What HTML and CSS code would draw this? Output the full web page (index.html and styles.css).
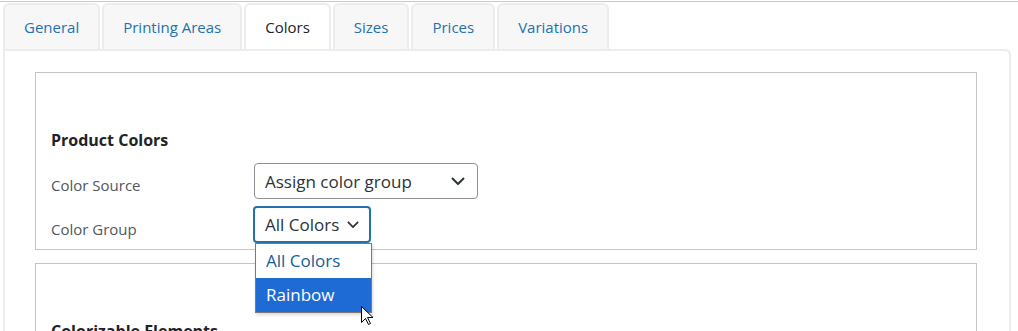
FILE: index.html
```html
<!DOCTYPE html>
<html lang="en">
<head>
    <meta charset="UTF-8">
    <meta name="viewport" content="width=device-width, initial-scale=1.0">
    <title>Product Settings - Colors</title>
    <link rel="stylesheet" href="styles.css">
</head>
<body>
    <div class="wrap">
        <ul class="tabs">
            <li class="tab">General</li>
            <li class="tab">Printing Areas</li>
            <li class="tab active">Colors</li>
            <li class="tab">Sizes</li>
            <li class="tab">Prices</li>
            <li class="tab">Variations</li>
        </ul>
        <div class="panel">
            <div class="box">
                <h3>Product Colors</h3>
                <div class="field">
                    <label>Color Source</label>
                    <div class="select wide">
                        <span>Assign color group</span>
                        <svg class="chevron" viewBox="0 0 14 8" width="14" height="8"><path d="M1 1l6 6 6-6" fill="none" stroke="#2c3338" stroke-width="2"/></svg>
                    </div>
                </div>
                <div class="field">
                    <label>Color Group</label>
                    <div class="select focus">
                        <span>All Colors</span>
                        <svg class="chevron" viewBox="0 0 14 8" width="12" height="7"><path d="M1 1l6 6 6-6" fill="none" stroke="#2c3338" stroke-width="2"/></svg>
                        <ul class="options">
                            <li>All Colors</li>
                            <li class="hover">Rainbow</li>
                        </ul>
                        <!-- mouse pointer over the open list -->
                        <svg class="cursor" viewBox="0 0 12 19" width="12" height="19"><path d="M0.5 0.5v16l4-4 3 6 2-1-3-6h5.5z" fill="#fff" stroke="#000" stroke-width="1"/></svg>
                    </div>
                </div>
            </div>
            <div class="box">
                <h3>Colorizable Elements</h3>
            </div>
        </div>
    </div>
</body>
</html>
```

FILE: styles.css
```css
html, body {
    height: 331px;
    overflow: hidden;
}

body {
    margin: 0;
    font-family: "Open Sans", "Noto Sans", sans-serif;
    background-color: #fff;
    color: #1d2327;
}

.wrap {
    margin-top: 1px;
    border-top: 1px solid #c8c8c8;
    padding: 1px 7px 0 3px;
}

.tabs {
    list-style: none;
    margin: 0;
    padding: 0;
    display: flex;
    gap: 2px;
}

.tab {
    height: 44px;
    line-height: 45px;
    padding: 0 19px;
    font-size: 15px;
    color: #2271b1;
    background-color: #f7f7f7;
    border: 2px solid #ececec;
    border-bottom: none;
    border-radius: 6px 6px 0 0;
}

.tab.active {
    color: #1d2327;
    background-color: #fff;
    position: relative;
    margin-bottom: -2px;
    z-index: 1;
}

.panel {
    border: 2px solid #ececec;
    border-bottom: none;
    border-radius: 0 6px 0 0;
    padding: 21px 32px 0 30px;
    height: 300px;
}

.box {
    border: 1px solid #c3c4c7;
    padding: 55px 15px 6px;
    margin-bottom: 13px;
}

h3 {
    margin: 0 0 11px;
    font-size: 16px;
    font-weight: 700;
    line-height: 24px;
}

.field {
    display: flex;
    align-items: center;
    margin-bottom: 7px;
}

.field:last-child {
    margin-bottom: 0;
}

label {
    width: 203px;
    font-size: 15px;
    color: #50575e;
    padding-top: 8px;
}

.select {
    position: relative;
    box-sizing: border-box;
    height: 37px;
    display: flex;
    align-items: center;
    justify-content: space-between;
    padding: 0 12px 0 10px;
    font-size: 17px;
    color: #2c3338;
    border: 1px solid #8c8f94;
    border-radius: 4px;
}

.select.wide {
    width: 224px;
    height: 36px;
}

.select.focus {
    width: 118px;
    margin-left: -1px;
    padding: 0 10px 0 10px;
    border: 2px solid #2271b1;
}

.chevron {
    display: block;
}

.options {
    list-style: none;
    margin: 0;
    padding: 0;
    position: absolute;
    top: 35px;
    left: 0;
    width: 115px;
    background-color: #fff;
    border: 1px solid #7a7a7a;
    box-shadow: 1px 2px 3px rgba(0,0,0,0.15);
    z-index: 2;
}

.options li {
    height: 34px;
    line-height: 34px;
    padding: 0 10px;
    font-size: 17px;
    color: #135e96;
}

.options li.hover {
    background-color: #1e6bd6;
    color: #fff;
}

.cursor {
    position: absolute;
    left: 106px;
    top: 98px;
    z-index: 3;
}
```
